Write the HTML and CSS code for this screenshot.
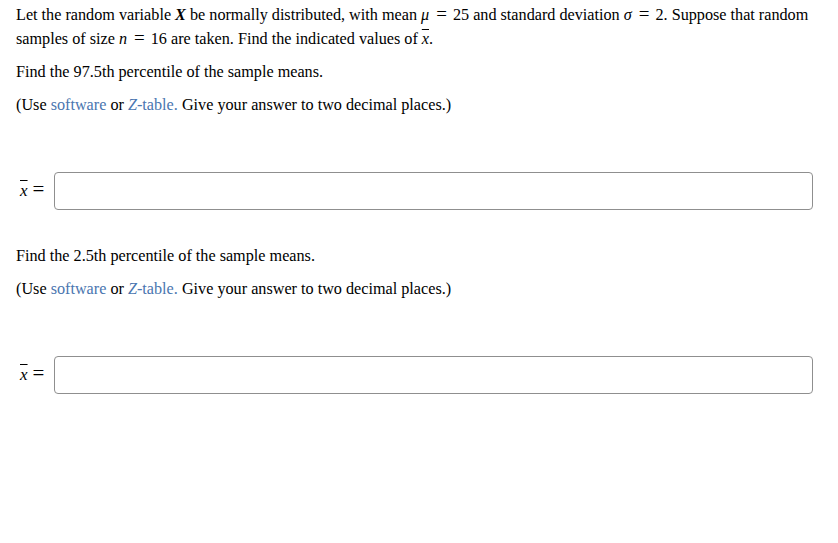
FILE: index.html
```html
<!DOCTYPE html>
<html>
<head>
<meta charset="utf-8">
<link rel="stylesheet" href="styles.css">
</head>
<body>
<div class="page">
  <p class="intro">Let the random variable <i class="bi">X</i> be normally distributed, with mean <i class="m">μ</i><span class="op">=</span>25 and standard deviation <i class="m">σ</i><span class="op">=</span>2. Suppose that random samples of size <i class="m">n</i><span class="op">=</span>16 are taken. Find the indicated values of <i class="m xbar">x</i>.</p>

  <p class="q">Find the 97.5th percentile of the sample means.</p>
  <p class="q">(Use <span class="link">software</span> or <span class="link"><i>Z</i>-table.</span> Give your answer to two decimal places.)</p>

  <div class="answer-row">
    <span class="label"><i class="m xbar">x</i><span class="op">=</span></span>
    <input class="answer" type="text">
  </div>

  <p class="q first">Find the 2.5th percentile of the sample means.</p>
  <p class="q">(Use <span class="link">software</span> or <span class="link"><i>Z</i>-table.</span> Give your answer to two decimal places.)</p>

  <div class="answer-row">
    <span class="label"><i class="m xbar">x</i><span class="op">=</span></span>
    <input class="answer" type="text">
  </div>
</div>
</body>
</html>
```

FILE: styles.css
```css
html, body {
  margin: 0;
  padding: 0;
  background: #ffffff;
}
body {
  font-family: "Liberation Serif", "Times New Roman", serif;
  font-size: 16.2px;
  color: #000;
}
.page {
  padding: 3px 25px 0 16px;
}
p {
  margin: 0;
  line-height: 24px;
}
.q {
  margin-top: 9px;
}
.q.first {
  margin-top: 34px;
}
.bi {
  font-weight: bold;
}
.m {
  font-style: italic;
}
.op {
  display: inline-block;
  font-size: 19px;
  line-height: 16px;
  margin: 0 6px 0 7px;
}
.xbar {
  text-decoration: overline;
  text-decoration-thickness: 1px;
}
.link {
  color: #4a76b0;
}
.answer-row {
  display: flex;
  align-items: center;
  margin-top: 55px;
}
.label {
  width: 38px;
  padding-left: 4px;
  box-sizing: border-box;
  white-space: nowrap;
}
.label .m {
  font-size: 17px;
}
.label .op {
  font-size: 21px;
  margin: 0 0 0 5px;
}
.answer {
  flex: 1;
  height: 38px;
  box-sizing: border-box;
  border: 1px solid #8f8f8f;
  border-radius: 4px;
  margin: 0;
  padding: 0 8px;
  font: inherit;
  outline: none;
}
```
